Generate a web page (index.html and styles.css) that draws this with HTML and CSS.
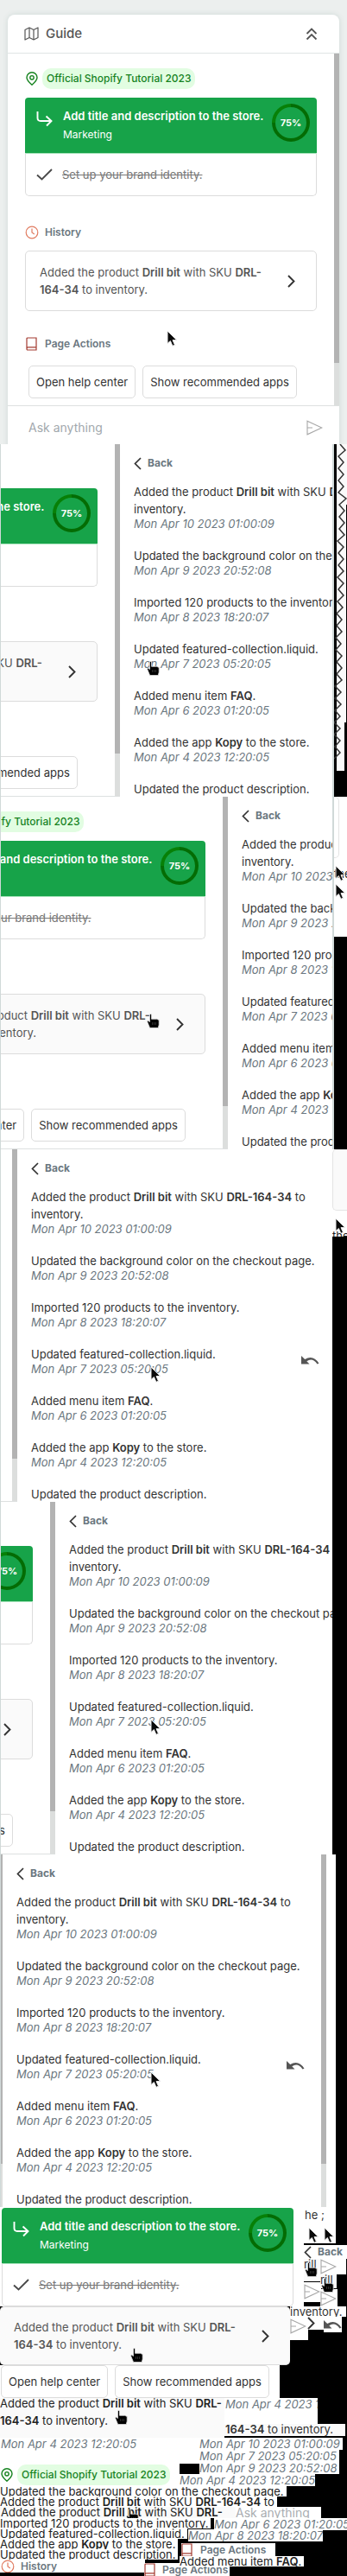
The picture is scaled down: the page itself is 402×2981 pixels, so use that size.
FILE: index.html
```
<!DOCTYPE html>
<html lang="en">
<head>
<meta charset="utf-8">
<title>Guide</title>
<link rel="stylesheet" href="styles.css">
</head>
<body>
<svg class="defs" aria-hidden="true">
  <symbol id="map" viewBox="0 0 17 16"><path d="M1 3.5 6 1l5 2.5L16 1v11.500L11 15l-5-2.500L1 15zM6 1v11.500M11 3.500V15" fill="none" stroke="currentColor" stroke-width="1.200" stroke-linejoin="round"/></symbol>
  <symbol id="collapse" viewBox="0 0 14 15"><path d="m1.500 7 5.500-5.500L12.500 7M1.500 13.500 7 8l5.500 5.500" fill="none" stroke="currentColor" stroke-width="1.800"/></symbol>
  <symbol id="pin" viewBox="0 0 14 16"><path d="M7 15.200C4 12.500 1 10 1 6.800a6 6 0 0 1 12 0C13 10 10 12.500 7 15.200z" fill="none" stroke="currentColor" stroke-width="1.400"/><circle cx="7" cy="6.800" r="2.200" fill="none" stroke="currentColor" stroke-width="1.400"/></symbol>
  <symbol id="turn" viewBox="0 0 19 19"><path d="M1.500 1v7.500q0 3.500 3.500 3.500h12M11.500 6.500 17.500 12l-5.500 5.500" fill="none" stroke="currentColor" stroke-width="1.900"/></symbol>
  <symbol id="check" viewBox="0 0 19 14"><path d="M1 7.500 6.500 12.500 18 1" fill="none" stroke="currentColor" stroke-width="1.900"/></symbol>
  <symbol id="clock" viewBox="0 0 16 16"><circle cx="8" cy="8" r="6.800" fill="none" stroke="currentColor" stroke-width="1.200"/><path d="M8 3.500V8l2.800 2" fill="none" stroke="currentColor" stroke-width="1.200"/></symbol>
  <symbol id="book" viewBox="0 0 13 16"><path d="M1 14V2q0-1 1-1h10v14H2q-1 0-1-1.200 0-2 1.500-2H12" fill="none" stroke="currentColor" stroke-width="1.200"/></symbol>
  <symbol id="next" viewBox="0 0 9 15"><path d="m1 1 6.500 6.500L1 14" fill="none" stroke="currentColor" stroke-width="1.900"/></symbol>
  <symbol id="prev" viewBox="0 0 9 15"><path d="M8 1 1.500 7.500 8 14" fill="none" stroke="currentColor" stroke-width="1.700"/></symbol>
  <symbol id="send" viewBox="0 0 19 18"><path d="M1 1.200 17.800 9 1 16.800zM1 9h6" fill="none" stroke="#a6a6a6" stroke-width="1.100"/></symbol>
  <symbol id="undo" viewBox="0 0 21 10"><path d="M0 0v9.500h9.500L6.300 6.300Q13 1.500 18.500 9.500l2-.8Q14-1.500 4.200 3.900z" fill="#555"/></symbol>
  <symbol id="arrow" viewBox="0 0 13 20"><path d="M1 1v14.500l3.400-3 2.500 5.800 2.600-1.100L7 11.600h4.800z" fill="#0a0a0a" stroke="#eee" stroke-width="1"/></symbol>
  <symbol id="hand" viewBox="0 0 15 17"><path d="M3.500 1q1-1 2 0v5.300h6.300l2.400 1.300V13l-1 3.500H3.600L.5 9l1-.8 2 1.300z" fill="#000" stroke="#ddd" stroke-width=".8"/><path d="M6.500 10v3M8.500 10v3M10.500 10v3" stroke="#444" stroke-width=".7"/></symbol>
</svg>

<template id="home-template">
  <section class="home">
    <div class="place"><svg class="i-pin"><use href="#pin"/></svg><span class="pill">Official Shopify Tutorial 2023</span></div>
    <div class="tasks">
      <div class="task-now">
        <svg class="i-turn"><use href="#turn"/></svg>
        <div class="task-text"><strong>Add title and description to the store.</strong><span>Marketing</span></div>
        <div class="ring"><span>75%</span></div>
      </div>
      <div class="task-done"><svg class="i-check"><use href="#check"/></svg><s>Set up your brand identity.</s></div>
    </div>
    <h2 class="title title-history"><svg class="i-clock"><use href="#clock"/></svg>History</h2>
    <button class="recent" type="button"><span>Added the product <b>Drill bit</b> with SKU <b>DRL-164-34</b> to inventory.</span><svg class="i-next"><use href="#next"/></svg></button>
    <h2 class="title title-actions"><svg class="i-book"><use href="#book"/></svg>Page Actions</h2>
    <div class="actions"><button type="button">Open help center</button><button type="button">Show recommended apps</button></div>
  </section>
</template>

<template id="history-template">
  <section class="history">
    <button class="back" type="button"><svg class="i-prev"><use href="#prev"/></svg>Back</button>
    <ul class="log">
      <li>Added the product <b>Drill bit</b> with SKU <b>DRL-164-34</b> to inventory.<time>Mon Apr 10 2023 01:00:09</time></li>
      <li>Updated the background color on the checkout page.<time>Mon Apr 9 2023 20:52:08</time></li>
      <li>Imported 120 products to the inventory.<time>Mon Apr 8 2023 18:20:07</time></li>
      <li class="revertable">Updated featured-collection.liquid.<time>Mon Apr 7 2023 05:20:05</time><svg class="i-undo"><use href="#undo"/></svg></li>
      <li>Added menu item <b>FAQ</b>.<time>Mon Apr 6 2023 01:20:05</time></li>
      <li>Added the app <b>Kopy</b> to the store.<time>Mon Apr 4 2023 12:20:05</time></li>
      <li>Updated the product description.</li>
    </ul>
  </section>
</template>

<main>
  <div class="stage">
    <div class="guide">
      <header class="guide-head"><svg class="i-map"><use href="#map"/></svg><h1>Guide</h1><button type="button" aria-label="Collapse"><svg class="i-collapse"><use href="#collapse"/></svg></button></header>
      <div class="guide-body" data-panels="home"></div>
      <form class="ask"><input type="text" placeholder="Ask anything" aria-label="Ask anything"><button type="button" aria-label="Send"><svg class="i-send"><use href="#send"/></svg></button></form>
    </div>
    <svg class="i-arrow pointer pointer-stage"><use href="#arrow"/></svg>
  </div>

  <div class="strip hovered">
    <div class="view"><div class="track shift-1" data-panels="home history"></div></div>
    <div class="edge"><svg class="zigzag" viewBox="0 0 15 408"><path d="M0 0h15v70h-1v252h-2v56H3V0z" fill="#fafafa"/><path d="M7 0l6 7-8 7 6 7-6 7 6 7-6 7 6 7-6 7 9 7-8 7 6 7-6 7 6 7-6 7 6 7-8 7 7 7-6 7 6 7-6 7 6 7-7 7 7 7-6 7 6 7-7 7 6 7-7 7 6 7-6 7 6 7-7 7 6 7-6 7 7 7-6 7 6 7-6 7 6 7-8 7 7 7-7 7 7 7-7 7 6 7-7 7 7 7-7 7 7 7-6 7 6 7-7 7" fill="none" stroke="#333" stroke-width="1.500"/><path d="M3 378h12v30H3z"/></svg></div>
    <svg class="i-hand pointer pointer-hand"><use href="#hand"/></svg>
  </div>

  <div class="strip hovered">
    <div class="view"><div class="track shift-2" data-panels="home history"></div></div>
    <div class="edge"><div class="slip slip-tall"><span class="scrap-text">the</span></div></div>
    <svg class="i-hand pointer pointer-hand"><use href="#hand"/></svg>
    <svg class="i-arrow pointer pointer-edge-high"><use href="#arrow"/></svg>
    <svg class="i-arrow pointer pointer-edge-low"><use href="#arrow"/></svg>
  </div>

  <div class="strip wide revert">
    <div class="view"><div class="track shift-3" data-panels="home history"></div></div>
    <div class="edge"><div class="slip slip-short"><span class="scrap-text">the</span></div></div>
    <svg class="i-arrow pointer pointer-arrow"><use href="#arrow"/></svg>
    <svg class="i-arrow pointer pointer-edge-high"><use href="#arrow"/></svg>
  </div>

  <div class="strip wide hovered">
    <div class="view"><div class="track shift-4" data-panels="home history"></div></div>
    <div class="edge"></div>
    <svg class="i-arrow pointer pointer-arrow"><use href="#arrow"/></svg>
  </div>

  <div class="strip last revert">
    <div class="view"><div class="track shift-5" data-panels="home history"></div></div>
    <div class="edge"></div>
    <svg class="i-arrow pointer pointer-arrow"><use href="#arrow"/></svg>
  </div>

  <div class="canvas">
    <div class="bit bit-top"></div>
    <div class="bit bit-tasks">
      <div class="tasks">
        <div class="task-now">
          <svg class="i-turn"><use href="#turn"/></svg>
          <div class="task-text"><strong>Add title and description to the store.</strong><span>Marketing</span></div>
          <div class="ring"><span>75%</span></div>
        </div>
        <div class="task-done"><svg class="i-check"><use href="#check"/></svg><s>Set up your brand identity.</s></div>
      </div>
    </div>
    <div class="bit bit-the">he ;</div>
    <svg class="bit i-arrow bit-arrow-1"><use href="#arrow"/></svg>
    <svg class="bit i-arrow bit-arrow-2"><use href="#arrow"/></svg>
    <div class="bit bit-hand-ground"></div>
    <button class="bit back bit-back" type="button"><svg class="i-prev"><use href="#prev"/></svg>Back</button>
    <div class="bit bit-rill-1">rill</div>
    <div class="bit bit-send bit-send-1"><svg class="i-send"><use href="#send"/></svg></div>
    <div class="bit bit-send bit-send-2"><svg class="i-send"><use href="#send"/></svg></div>
    <div class="bit bit-rill-2">rill</div>
    <div class="bit bit-send bit-send-3"><svg class="i-send"><use href="#send"/></svg></div>
    <svg class="bit i-hand bit-hand-1"><use href="#hand"/></svg>
    <svg class="bit i-hand bit-hand-2"><use href="#hand"/></svg>
    <div class="bit bit-inventory">inventory.</div>
    <div class="bit bit-send bit-send-4"><svg class="i-send"><use href="#send"/></svg></div>
    <div class="bit bit-next"><svg class="i-next"><use href="#next"/></svg></div>
    <div class="bit bit-undo"><svg class="i-undo"><use href="#undo"/></svg></div>

    <button class="bit recent bit-recent" type="button"><span>Added the product <b>Drill bit</b> with SKU <b>DRL-164-34</b> to inventory.</span><svg class="i-next"><use href="#next"/></svg></button>
    <svg class="bit i-hand bit-hand-3"><use href="#hand"/></svg>
    <div class="bit bit-actions actions"><button type="button">Open help center</button><button type="button">Show recommended apps</button></div>

    <div class="bit bit-entry">Added the product <b>Drill bit</b> with SKU <b>DRL-<br>164-34</b> to inventory.</div>
    <svg class="bit i-hand bit-hand-4"><use href="#hand"/></svg>
    <div class="bit bit-date-cut"><time>Mon Apr 4 2023 12:20:05</time></div>
    <div class="bit bit-sku"><b>164-34</b> to inventory.</div>

    <div class="bit bit-ground"><time>Mon Apr 4 2023 12:20:05</time></div>
    <div class="bit bit-place place"><svg class="i-pin"><use href="#pin"/></svg><span class="pill">Official Shopify Tutorial 2023</span></div>
    <div class="bit bit-dates"><time>Mon Apr 10 2023 01:00:09</time><time>Mon Apr 7 2023 05:20:05</time><time>Mon Apr 9 2023 20:52:08</time></div>
    <div class="bit bit-date-low"><time>Mon Apr 4 2023 12:20:05</time></div>

    <div class="bit line line-1">Updated the background color on the checkout page.</div>
    <div class="bit line line-2">Added the product <b>Drill bit</b> with SKU <b>DRL-164-34</b> to</div>
    <div class="bit line line-3">Added the product <b>Drill bit</b> with SKU <b>DRL-</b></div>
    <svg class="bit i-hand bit-hand-5"><use href="#hand"/></svg>
    <div class="bit bit-ask">Ask anything</div>
    <div class="bit line line-4">Imported 120 products to the inventory.</div>
    <div class="bit bit-date-6"><time>Mon Apr 6 2023 01:20:05</time></div>
    <div class="bit line line-5">Updated featured-collection.liquid.</div>
    <div class="bit bit-date-8"><time>Mon Apr 8 2023 18:20:07</time></div>
    <div class="bit line line-6">Added the app <b>Kopy</b> to the store.</div>
    <div class="bit line line-7">Updated the product description.</div>
    <div class="bit title bit-page-1"><svg class="i-book"><use href="#book"/></svg>Page Actions</div>
    <div class="bit title bit-history"><svg class="i-clock"><use href="#clock"/></svg>History</div>
    <div class="bit title bit-page-2"><svg class="i-book"><use href="#book"/></svg>Page Actions</div>
    <div class="bit line line-8">Added menu item <b>FAQ</b>.</div>
  </div>
</main>
<script src="panels.js"></script>
</body>
</html>
```
FILE: panels.js
```
document.querySelectorAll('[data-panels]').forEach(function (host) {
  host.dataset.panels.split(' ').forEach(function (name) {
    host.appendChild(document.getElementById(name + '-template').content.cloneNode(true));
  });
});
```
FILE: styles.css
```
* { box-sizing: border-box; }
body { margin: 0; background: #000; color: #333; font: 13px/20px Inter, "Liberation Sans", sans-serif; }
main { overflow: hidden; }
h1, h2, ul { margin: 0; padding: 0; }
button { margin: 0; padding: 0; border: 0; background: none; color: inherit; font: inherit; text-align: left; }
svg { display: block; flex: none; }
b { font-weight: 600; }
.defs { position: absolute; width: 0; height: 0; }

.i-map { width: 17px; height: 16px; }
.i-collapse { width: 14px; height: 15px; }
.i-pin { width: 14px; height: 16px; color: #16831f; }
.i-turn { width: 19px; height: 19px; }
.i-check { width: 19px; height: 14px; color: #4a4a4a; }
.i-clock { width: 16px; height: 16px; color: #e07b60; }
.i-book { width: 13px; height: 16px; color: #a33b30; }
.i-next, .i-prev { width: 9px; height: 15px; color: #333; }
.i-send { width: 19px; height: 18px; }
.i-undo { width: 21px; height: 10px; }
.i-arrow { width: 13px; height: 20px; }
.i-hand { width: 15px; height: 17px; }

/* Guide card */
.stage { position: relative; height: 514px; padding: 17px 9px 0; background: #ecefee; overflow: hidden; }
.guide { height: 520px; border-radius: 8px; background: #fff; box-shadow: 0 0 6px #cdd8d6; }
.guide-head { display: flex; align-items: center; gap: 8px; height: 45px; padding: 0 25px 0 19px; border-bottom: 1px solid #e0e4e4; color: #555; }
.guide-head h1 { flex: 1; font-size: 15px; line-height: 20px; font-weight: 500; }
.guide-body { height: 407px; }
.ask { display: flex; align-items: center; height: 50px; padding: 0 19px 0 24px; border-top: 1px solid #dde0e0; }
.ask input { flex: 1; min-width: 0; padding: 0; border: 0; font: 14px/20px Inter, sans-serif; color: #333; }
.ask input::placeholder { color: #a2a8ad; opacity: 1; }

/* Home panel */
.home { position: relative; flex: none; width: 384px; height: 407px; padding: 17px 26px 0 20px; background: #fff; }
.home::after { content: ""; position: absolute; top: 0; right: 0; width: 6px; height: 100%; background: linear-gradient(#b3b3b3 358px, #dcdedd 358px); }
.place { display: flex; align-items: center; gap: 5px; padding-left: 1px; }
.pill { padding: 0 5px; border-radius: 10px; background: #e2fde2; color: #16831f; font-size: 12px; line-height: 24px; font-weight: 500; white-space: nowrap; }
.home .tasks { margin-top: 10px; }
.task-now { display: flex; align-items: center; height: 64px; padding: 0 8px 0 13px; border-radius: 4px 4px 0 0; background: #17a349; color: #fff; }
.task-now .i-turn { margin-bottom: 15px; }
.task-text { display: flex; flex-direction: column; flex: 1; min-width: 0; margin-left: 12px; font-size: 12px; line-height: 21px; white-space: nowrap; }
.task-text strong { font-size: 13px; font-weight: 600; }
.ring { display: grid; place-items: center; flex: none; width: 44px; height: 44px; margin-bottom: 6px; border-radius: 50%; background: conic-gradient(#046c04 75%, #078007 0); }
.ring span { width: 36px; height: 36px; border-radius: 50%; background: #17a349; font-size: 11px; line-height: 36px; font-weight: 700; text-align: center; }
.task-done { display: flex; align-items: center; gap: 11px; height: 50px; padding-left: 12px; border: 1px solid #dcdcdc; border-top-color: #a5e3b9; border-radius: 0 0 5px 5px; background: #fff; color: #777; font-size: 13px; }
.title { display: flex; align-items: center; gap: 7px; color: #6b7780; font-size: 12px; line-height: 20px; font-weight: 600; }
.title-history { margin-top: 32px; }
.title-actions { margin-top: 28px; padding-left: 1px; }
.title-actions .i-book { margin-right: 2px; }
.recent { display: flex; align-items: center; width: 100%; margin-top: 11px; padding: 14px 24px 14px 16px; border: 1px solid #dcdcdc; border-radius: 5px; background: #fff; color: #555; line-height: 20px; }
.recent span { flex: 1; padding-right: 16px; }
.hovered .recent { background: #fafafa; }
.actions { display: flex; gap: 8px; font-size: 13px; line-height: 36px; }
.home .actions { margin: 15px 0 0 4px; }
.actions button { padding: 0 8px; border: 1px solid #dcdcdc; border-radius: 5px; background: #fff; white-space: nowrap; }

/* History panel */
.history { flex: none; width: 375px; height: 408px; padding: 12px 16px 0; background: #fff; overflow: hidden; }
.back { display: flex; align-items: center; gap: 7px; color: #6b7780; font-size: 12px; line-height: 20px; font-weight: 700; }
.log { margin-top: 13px; list-style: none; }
.log li { margin-bottom: 20px; }
time { display: block; color: #6b7780; font-size: 13px; line-height: 14px; font-style: italic; white-space: nowrap; }
.revertable { position: relative; }
.revertable .i-undo { position: absolute; right: 9px; top: 12px; display: none; }
.revert .i-undo { display: block; }

/* Sliding frames */
.strip { position: relative; display: grid; grid-template-columns: 1fr 15px; height: 408px; }
.strip.wide { grid-template-columns: 1fr 17px; }
.strip.last { grid-template-columns: 1fr 13px; }
.view { min-width: 0; overflow: hidden; background: #fff; border: solid #d0d9d8; border-width: 0 2px 0 1px; }
.wide .view, .last .view { border-right: 0; }
.track { display: flex; }
.track .home { border-bottom: 1px solid #dde0e0; height: 408px; }
.shift-1 { margin-left: -246px; }
.shift-2 { margin-left: -121px; }
.shift-3 { margin-left: -365px; }
.shift-4 { margin-left: -321px; }
.shift-5 { margin-left: -382px; }
.last .history { background: linear-gradient(#b3b3b3 358px, #dcdedd 358px) right / 6px 100% no-repeat #fff; }
.edge { overflow: hidden; }
.zigzag { width: 15px; height: 408px; }
.slip { display: flex; flex-direction: column; background: #fff; overflow: hidden; color: #222; }
.slip::before { content: ""; flex: none; width: 100%; height: 69px; border: 1px solid #e4e4e4; border-radius: 0 5px 5px 0; }
.slip-tall { height: 162px; }
.slip-tall::before { width: 5px; border-left: 0; }
.slip-tall .scrap-text { margin-top: 8px; }
.slip-short { height: 101px; }
.slip-short::before { border-radius: 5px 0 0 5px; border-right: 0; background: #fafafa; }
.slip-short .scrap-text { margin-top: 19px; }
.pointer { position: absolute; top: 251px; }
.pointer-stage { left: 193px; top: 382px; }
.pointer-hand { left: 170px; }
.pointer-arrow { left: 174px; }
.pointer-edge-high { left: 388px; top: 79px; }
.pointer-edge-low { left: 388px; top: 100px; }

/* Free canvas of loose pieces */
.canvas { position: relative; height: 427px; overflow: hidden; }
.bit { position: absolute; background: #fff; white-space: nowrap; overflow: hidden; }
svg.bit { background: none; }
.bit-top { left: 0; top: 0; width: 389px; height: 42px; }
.bit-tasks { left: 0; top: 0; width: 352px; height: 115px; padding: 1px 12px 0 2px; }
.bit-the { left: 353px; top: 0; line-height: 18px; }
.bit-arrow-1 { left: 357px; top: 23px; }
.bit-arrow-2 { left: 375px; top: 23px; }
.bit-hand-ground { left: 352px; top: 60px; width: 38px; height: 26px; background: #fafafa; }
.bit-back { left: 352px; top: 44px; width: 50px; height: 16px; }
.bit-rill-1, .bit-rill-2 { width: 19px; height: 16px; line-height: 12px; background: #fafafa; }
.bit-rill-1 { left: 352px; top: 60px; }
.bit-rill-2 { left: 371px; top: 78px; }
.bit-send { width: 20px; height: 23px; padding-top: 2px; }
.bit-send-1 { left: 371px; top: 60px; width: 30px; height: 18px; padding-top: 0; }
.bit-send-2 { left: 352px; top: 87px; }
.bit-send-3 { left: 371px; top: 95px; }
.bit-send-4 { left: 336px; top: 127px; width: 21px; height: 27px; }
.bit-hand-1 { left: 353px; top: 64px; }
.bit-hand-2 { left: 372px; top: 82px; }
.bit-inventory { left: 336px; top: 115px; width: 65px; height: 12px; line-height: 12px; }
.bit-next { left: 356px; top: 127px; width: 19px; height: 15px; }
.bit-undo { left: 375px; top: 127px; width: 21px; height: 18px; padding-top: 4px; }
.bit-recent { left: 0; top: 115px; width: 336px; height: 68px; margin: 0; border-width: 1px 0; background: #fafafa; white-space: normal; }
.bit-hand-3 { left: 151px; top: 163px; }
.bit-actions { left: 0; top: 183px; width: 324px; height: 38px; padding-left: 1px; }
.bit-entry { left: 0; top: 217px; width: 260px; height: 50px; background: linear-gradient(transparent 4px, #fafafa 4px); color: #222; }
.bit-hand-4 { left: 133px; top: 235px; }
.bit-date-cut { left: 260px; top: 221px; width: 108px; height: 30px; padding-left: 1px; }
.bit-sku { left: 260px; top: 251px; width: 140px; height: 14px; padding-left: 1px; line-height: 13px; background: #fafafa; }
.bit-ground { left: 0; top: 267px; width: 208px; height: 56px; padding-left: 1px; }
.bit-ground::before { content: ""; }
.bit-place { left: 0; top: 298px; padding-left: 1px; }
.bit-dates { left: 207px; top: 267px; padding-left: 24px; background: linear-gradient(#fff 30px, transparent 30px) left / 25px 100% no-repeat; }
.bit-dates time { width: max-content; padding-right: 3px; background: #fff; }
.bit-date-low { left: 208px; top: 309px; }
.bit-ask { left: 273px; top: 347px; width: 99px; height: 13px; font-size: 14px; line-height: 13px; color: #a9adb1; }
.bit-date-6 { left: 248px; top: 360px; }
.bit-date-8 { left: 218px; top: 373px; }
.line { left: 0; height: 12px; padding-right: 3px; line-height: 12px; color: #222; }
.line-1 { top: 323px; }
.line-2 { top: 335px; }
.line-3 { top: 347px; width: 273px; height: 13px; background: #fafafa; padding-left: 1px; }
.bit-hand-5 { left: 146px; top: 349px; }
.line-4 { top: 360px; }
.line-5 { top: 372px; }
.line-6 { top: 384px; }
.line-7 { top: 396px; }
.line-8 { left: 208px; top: 404px; }
.bit-page-1 { left: 210px; top: 389px; width: 109px; height: 16px; gap: 9px; }
.bit-history { left: 0; top: 408px; width: 168px; height: 15px; padding-left: 1px; }
.bit-page-2 { left: 167px; top: 412px; width: 99px; height: 15px; gap: 8px; }
```
